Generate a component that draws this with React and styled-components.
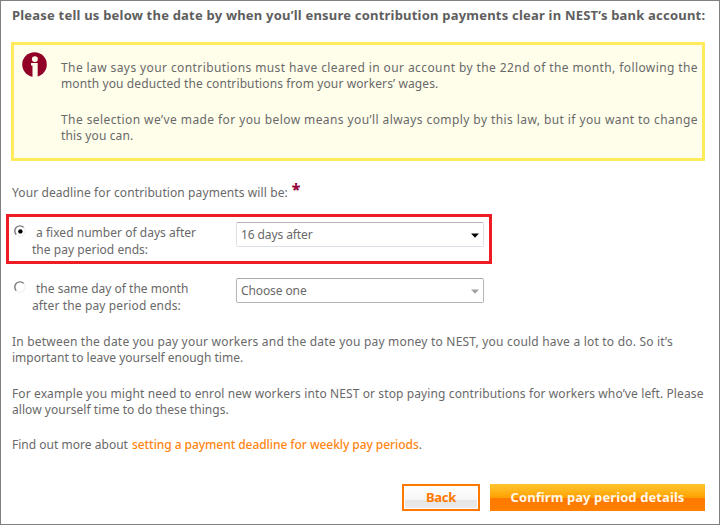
import React from "react";
import styled, { createGlobalStyle } from "styled-components";

const GlobalStyle = createGlobalStyle`
  * { box-sizing: border-box; }
  body { margin: 0; background: #fff; }
`;

const Page = styled.main`
  display: flex;
  flex-direction: column;
  width: 720px;
  height: 525px;
  padding: 5px 14px 0 10px;
  border: 1px solid #808080;
  overflow: hidden;
  background: #fff;
  color: #696969;
  font: 12px/16px "Noto Sans", "Open Sans", sans-serif;
`;

const Line = styled.span`
  display: block;
  white-space: nowrap;
  letter-spacing: ${(p) => p.$track || 0}px;
`;

const Heading = styled.h1`
  margin: 0 0 18px;
  padding-left: 1px;
  height: 18px;
  font-size: 13px;
  line-height: 18px;
  font-weight: 700;
  color: #5e5e5e;
`;

const Notice = styled.section`
  display: flex;
  flex: none;
  height: 119px;
  width: 694px;
  padding: 7px 8px;
  border: 3px solid #ffeb5c;
  background: #fffeeb;
`;

const InfoIcon = styled.svg`
  flex: none;
  width: 25px;
  height: 25px;
  margin-right: 14px;
`;

const NoticeText = styled.div`
  display: flex;
  flex-direction: column;
  gap: 20px;
  padding-top: 8px;
`;

const Paragraph = styled.p`
  margin: 0;
`;

const Prompt = styled.div`
  display: flex;
  flex: none;
  margin-top: 23px;
  height: 17px;
  padding: 1px 0 0 1px;
`;

const Required = styled.span`
  margin: -3px 0 0 4px;
  color: #96003a;
  font-size: 16px;
  line-height: 15px;
  font-weight: 800;
`;

const Option = styled.label`
  display: flex;
  flex: none;
  align-items: flex-start;
  width: 486px;
  height: 50px;
  margin: ${(p) => (p.$highlight ? 13 : 6)}px 0 0 -5px;
  padding: 5px 5px 0 6px;
  border: 3px solid ${(p) => (p.$highlight ? "#ee1c25" : "transparent")};
`;

const Radio = styled.svg`
  flex: none;
  width: 12px;
  height: 12px;
  margin: 3px 0 0 -1px;
`;

const OptionText = styled.span`
  width: 210px;
  padding: 3px 0 0 6px;
  line-height: 16.5px;
`;

const FirstLine = styled(Line)`
  padding-left: ${(p) => p.$indent}px;
`;

const Select = styled.span`
  display: flex;
  align-items: center;
  justify-content: space-between;
  flex: none;
  width: 248px;
  height: 25px;
  padding: 0 4px;
  border: 1px solid ${(p) => (p.$disabled ? "#b4b4b4" : "#dfdfe8")};
  border-top-color: ${(p) => (p.$disabled ? "#aaa" : "#b4b4b8")};
  border-radius: 2px;
  background: #fff;
`;

const Caret = styled.svg`
  width: 8px;
  height: 5px;
  margin-top: 2px;
  fill: ${(p) => (p.$disabled ? "#a0a0a0" : "#000")};
`;

const Advice = styled.div`
  display: flex;
  flex-direction: column;
  gap: 19.5px;
  margin-top: 14px;
  padding-left: 1px;
`;

const MoreInfo = styled.p`
  display: flex;
  margin: 0;
`;

const Link = styled.a`
  margin: 0 0 0 4px;
  color: #ff850f;
  font-weight: 500;
  letter-spacing: -0.06px;
  white-space: nowrap;
`;

const Actions = styled.div`
  display: flex;
  justify-content: flex-end;
  gap: 10px;
  margin-top: 31px;
`;

const Button = styled.button`
  width: ${(p) => (p.$primary ? 215 : 78)}px;
  height: 27px;
  padding: 0 0 1px;
  border: ${(p) => (p.$primary ? "0" : "2px solid #ff7900")};
  background: ${(p) =>
    p.$primary
      ? "linear-gradient(#ffc52b 0, #ffb51b 25%, #ffa000 50%, #ff7900 51%, #ff8000 100%)"
      : "linear-gradient(#fff 0, #f6f6f6 60%, #e5e5e5 61%, #ececec 100%)"};
  box-shadow: ${(p) => (p.$primary ? "none" : "inset 0 0 0 1px #fff")};
  color: ${(p) => (p.$primary ? "#fff8e8" : "#ff7900")};
  font: 700 13px/20px "Noto Sans", sans-serif;
  letter-spacing: ${(p) => (p.$primary ? 0.09 : -0.25)}px;
`;

function RadioMark({ checked }) {
  return (
    <Radio viewBox="0 0 12 12">
      <path d="M2.3 9.8A5 5 0 0 1 9.8 2.4" fill="none" stroke="#777" strokeWidth="1.4" />
      <path d="M9.8 2.4A5 5 0 0 1 2.3 9.8" fill="none" stroke="#ececec" strokeWidth="1" />
      {checked && <circle cx="6.4" cy="6.4" r="2.2" fill="#000" />}
    </Radio>
  );
}

function Dropdown({ value, disabled, track }) {
  return (
    <Select $disabled={disabled}>
      <Line $track={track}>{value}</Line>
      <Caret $disabled={disabled} viewBox="0 0 8 5">
        <path d="M0 .5h8L4 4.8z" />
      </Caret>
    </Select>
  );
}

export default function App() {
  return (
    <>
      <GlobalStyle />
      <Page>
        <Heading>
          <Line $track={0.207}>
            Please tell us below the date by when you’ll ensure contribution payments clear in NEST’s bank account:
          </Line>
        </Heading>
        <Notice>
          <InfoIcon viewBox="0 0 26 26">
            <circle cx="13" cy="13" r="12.8" fill="#910027" />
            <circle cx="13.4" cy="7.4" r="3.1" fill="#fffeeb" />
            <path d="M9.4 11.4h6.9V26h-5.4V14H9.4z" fill="#fffeeb" />
          </InfoIcon>
          <NoticeText>
            <Paragraph>
              <Line $track={0.403}>
                The law says your contributions must have cleared in our account by the 22nd of the month, following the
              </Line>
              <Line $track={0.11}>month you deducted the contributions from your workers’ wages.</Line>
            </Paragraph>
            <Paragraph>
              <Line $track={0.413}>
                The selection we’ve made for you below means you’ll always comply by this law, but if you want to change
              </Line>
              <Line $track={0.12}>this you can.</Line>
            </Paragraph>
          </NoticeText>
        </Notice>
        <Prompt>
          <Line $track={0.1}>Your deadline for contribution payments will be:</Line>
          <Required>*</Required>
        </Prompt>
        <Option $highlight>
          <RadioMark checked />
          <OptionText>
            <FirstLine $indent={4} $track={0.03}>a fixed number of days after</FirstLine>
            <Line $track={0.03}>the pay period ends:</Line>
          </OptionText>
          <Dropdown value="16 days after" track={-0.1} />
        </Option>
        <Option>
          <RadioMark />
          <OptionText>
            <FirstLine $indent={4} $track={0}>the same day of the month</FirstLine>
            <Line $track={0.13}>after the pay period ends:</Line>
          </OptionText>
          <Dropdown value="Choose one" track={-0.1} disabled />
        </Option>
        <Advice>
          <Paragraph>
            <Line $track={0.207}>
              In between the date you pay your workers and the date you pay money to NEST, you could have a lot to do. So it’s
            </Line>
            <Line>important to leave yourself enough time.</Line>
          </Paragraph>
          <Paragraph>
            <Line $track={0.11}>
              For example you might need to enrol new workers into NEST or stop paying contributions for workers who’ve left. Please
            </Line>
            <Line $track={0.05}>allow yourself time to do these things.</Line>
          </Paragraph>
          <MoreInfo>
            <Line $track={0.02}>Find out more about</Line>
            <Link>setting a payment deadline for weekly pay periods</Link>.
          </MoreInfo>
        </Advice>
        <Actions>
          <Button>Back</Button>
          <Button $primary>Confirm pay period details</Button>
        </Actions>
      </Page>
    </>
  );
}
